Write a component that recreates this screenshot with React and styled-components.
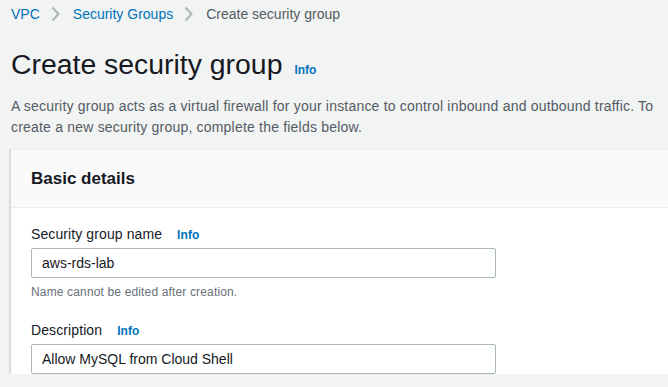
import React from 'react';
import styled, { createGlobalStyle } from 'styled-components';

const GlobalStyle = createGlobalStyle`
  html, body {
    margin: 0;
    padding: 0;
    background: #f2f3f3;
    font-family: "Liberation Sans", Arial, sans-serif;
    color: #16191f;
    overflow: hidden;
  }
`;

const Page = styled.div`
  width: 668px;
  height: 387px;
  overflow: hidden;
  padding-left: 11px;
  box-sizing: border-box;
`;

const Crumbs = styled.nav`
  display: flex;
  align-items: center;
  height: 28px;
  font-size: 14px;
`;

const Crumb = styled.span`
  color: ${props => props.current ? '#545b64' : '#0073bb'};
`;

const Sep = styled.span`
  display: flex;
  align-items: center;
  margin: 0 13px 0 11px;
  color: #aab7b8;
`;

const TitleRow = styled.div`
  display: flex;
  align-items: baseline;
  margin-top: 19px;
`;

const Title = styled.h1`
  margin: 0;
  font-size: 28.4px;
  font-weight: 400;
  line-height: 34px;
  color: #16191f;
`;

const Info = styled.span`
  color: #0073bb;
  font-weight: 700;
  font-size: 12px;
  margin-left: ${props => props.gap || 12}px;
`;

const Intro = styled.p`
  margin: 15px 0 0;
  font-size: 14px;
  letter-spacing: 0.2px;
  line-height: 21px;
  color: #545b64;
  width: 654px;
`;

const Panel = styled.section`
  margin-top: 11px;
  margin-left: -1px;
  background: #fff;
  border-left: 1px solid #d5dbdb;
  border-top: 1px solid #eaeded;
  box-shadow: -1px 0 1px rgba(0, 22, 43, 0.08);
`;

const PanelHeader = styled.header`
  background: #fafafa;
  border-bottom: 1px solid #eaeded;
  height: 57px;
  display: flex;
  align-items: center;
  padding-left: 20px;
`;

const PanelTitle = styled.h2`
  margin: 0;
  font-size: 17px;
  font-weight: 700;
  color: #16191f;
`;

const PanelBody = styled.div`
  padding: 16px 20px 0;
`;

const Field = styled.div`
  display: flex;
  flex-direction: column;
  margin-bottom: ${props => props.spaced ? 21 : 0}px;
`;

const LabelRow = styled.div`
  display: flex;
  align-items: baseline;
  height: 20px;
  line-height: 20px;
  margin-bottom: 4px;
  font-size: 14px;
  letter-spacing: 0.1px;
  color: #16191f;
`;

const Input = styled.div`
  width: 465px;
  height: 30px;
  box-sizing: border-box;
  border: 1px solid #aab7b8;
  border-radius: 2px;
  background: #fff;
  display: flex;
  align-items: center;
  padding-left: 10px;
  font-size: 14px;
  color: #16191f;
`;

const Hint = styled.div`
  margin-top: 7px;
  font-size: 12px;
  line-height: 14px;
  letter-spacing: 0.15px;
  color: #687078;
`;

const Chevron = () => (
  <svg width="9" height="16" viewBox="0 0 9 16">
    <path d="M1.5 1.5l6 6.5-6 6.5" fill="none" stroke="currentColor" strokeWidth="2" />
  </svg>
);

export default function App() {
  return (
    <Page>
      <GlobalStyle />
      <Crumbs>
        <Crumb>VPC</Crumb>
        <Sep><Chevron /></Sep>
        <Crumb>Security Groups</Crumb>
        <Sep><Chevron /></Sep>
        <Crumb current>Create security group</Crumb>
      </Crumbs>
      <TitleRow>
        <Title>Create security group</Title>
        <Info>Info</Info>
      </TitleRow>
      <Intro>
        A security group acts as a virtual firewall for your instance to control inbound and outbound traffic. To
        create a new security group, complete the fields below.
      </Intro>
      <Panel>
        <PanelHeader>
          <PanelTitle>Basic details</PanelTitle>
        </PanelHeader>
        <PanelBody>
          <Field spaced>
            <LabelRow>
              Security group name<Info gap={15}>Info</Info>
            </LabelRow>
            <Input>aws-rds-lab</Input>
            <Hint>Name cannot be edited after creation.</Hint>
          </Field>
          <Field>
            <LabelRow>
              Description<Info gap={15}>Info</Info>
            </LabelRow>
            <Input>Allow MySQL from Cloud Shell</Input>
          </Field>
        </PanelBody>
      </Panel>
    </Page>
  );
}
